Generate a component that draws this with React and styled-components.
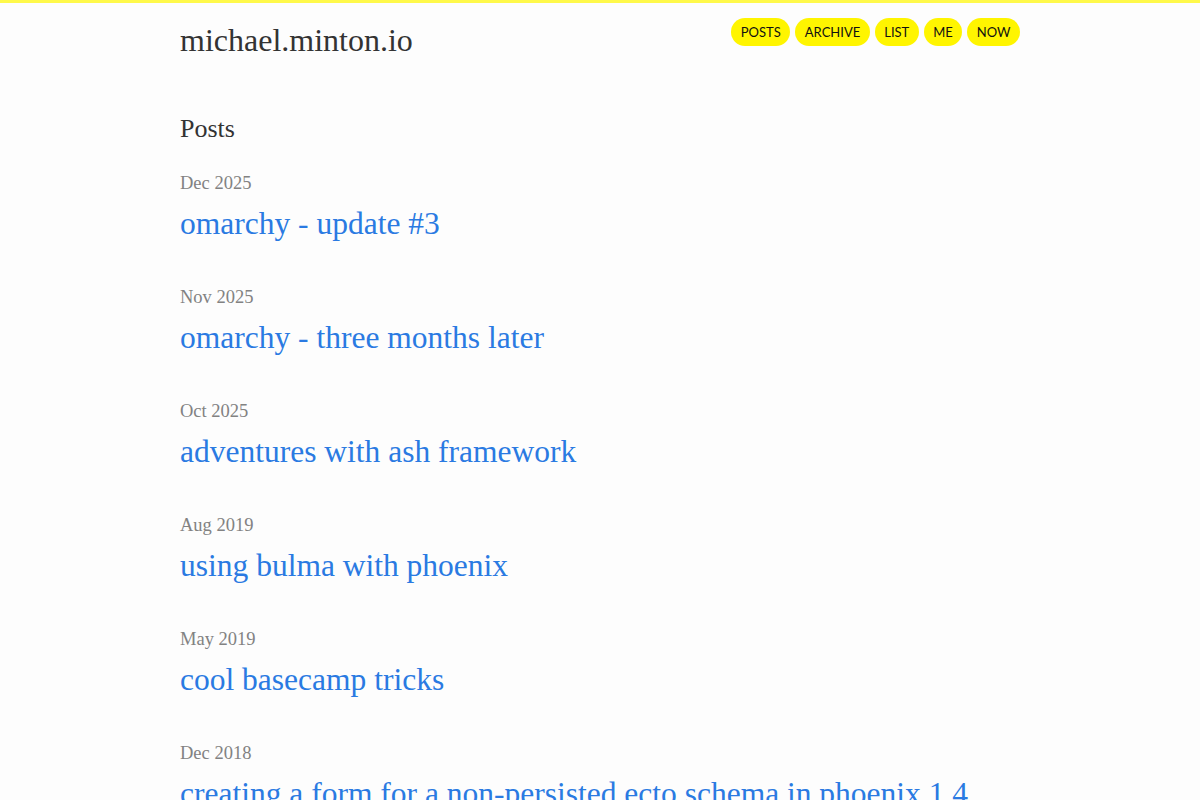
import React from "react";
import styled, { createGlobalStyle } from "styled-components";

const Global = createGlobalStyle`
  html, body { margin: 0; padding: 0; background: #fdfdfd; }
  body { font-family: "Liberation Serif", "Times New Roman", serif; color: #333; }
`;

const TopBar = styled.div`
  height: 3px;
  background: #fff94a;
`;

const Wrapper = styled.div`
  width: 840px;
  margin: 0 auto;
`;

const Header = styled.header`
  display: flex;
  justify-content: space-between;
  align-items: flex-start;
  padding-top: 15px;
`;

const SiteTitle = styled.a`
  font-size: 32px;
  line-height: 44px;
  color: #333;
  text-decoration: none;
`;

const Nav = styled.nav`
  display: flex;
  gap: 5px;
`;

const Pill = styled.a`
  display: inline-flex;
  align-items: center;
  height: 28px;
  padding: 0 9.5px;
  border-radius: 14px;
  background: #fff500;
  color: #111;
  font-family: Lato, "Liberation Sans", sans-serif;
  font-size: 13px;
  text-decoration: none;
  text-transform: uppercase;
`;

const Main = styled.main`
  padding-top: 52px;
`;

const Heading = styled.h1`
  margin: 0 0 28px;
  font-size: 26px;
  font-weight: normal;
  line-height: 30px;
  color: #333;
`;

const List = styled.ul`
  list-style: none;
  margin: 0;
  padding: 0;
  display: flex;
  flex-direction: column;
  gap: 40px;
`;

const Item = styled.li`
  display: flex;
  flex-direction: column;
  gap: 8px;
`;

const DateText = styled.span`
  font-size: 18.5px;
  line-height: 22px;
  color: #828282;
`;

const PostLink = styled.a`
  font-size: 31.5px;
  line-height: 44px;
  color: #2a7ae2;
  text-decoration: none;
`;

const posts = [
  ["Dec 2025", "omarchy - update #3"],
  ["Nov 2025", "omarchy - three months later"],
  ["Oct 2025", "adventures with ash framework"],
  ["Aug 2019", "using bulma with phoenix"],
  ["May 2019", "cool basecamp tricks"],
  ["Dec 2018", "creating a form for a non-persisted ecto schema in phoenix 1.4"],
];

export default function App() {
  return (
    <>
      <Global />
      <TopBar />
      <Wrapper>
        <Header>
          <SiteTitle href="#">michael.minton.io</SiteTitle>
          <Nav>
            {["Posts", "Archive", "List", "Me", "Now"].map((n) => (
              <Pill key={n} href="#">{n}</Pill>
            ))}
          </Nav>
        </Header>
        <Main>
          <Heading>Posts</Heading>
          <List>
            {posts.map(([d, t]) => (
              <Item key={t}>
                <DateText>{d}</DateText>
                <PostLink href="#">{t}</PostLink>
              </Item>
            ))}
          </List>
        </Main>
      </Wrapper>
    </>
  );
}
